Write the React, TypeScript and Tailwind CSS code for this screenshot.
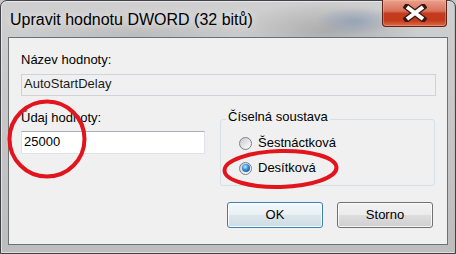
import { type ReactNode } from 'react';

function CloseButton() {
  return (
    <div className="-mt-px mr-px flex h-[27px] w-[65px] items-center justify-center rounded-b-[4px] border border-t-0 border-[#5a2418] bg-[linear-gradient(to_bottom,#e9a08c_0%,#d9735a_42%,#c43b1d_52%,#c23a1c_78%,#de6a47_100%)] shadow-[inset_0_0_0_1px_rgba(255,200,180,0.35)]">
      <svg width="24" height="18" viewBox="0 0 24 18">
        <path d="M4 3 L20 15 M20 3 L4 15" stroke="#3a1710" strokeWidth="6.5" strokeLinecap="square" />
        <path d="M4 3 L20 15 M20 3 L4 15" stroke="#ffffff" strokeWidth="4" strokeLinecap="butt" />
      </svg>
    </div>
  );
}

function Radio({ label, checked }: { label: string; checked?: boolean }) {
  return (
    <div className="flex h-[16px] items-center gap-[6px]">
      <span className="flex h-[13px] w-[13px] items-center justify-center rounded-full border border-[#7d8185] bg-[linear-gradient(135deg,#c9cacb_0%,#e8e8e8_55%,#ffffff_100%)]">
        {checked && (
          <span className="h-[8px] w-[8px] rounded-full bg-[radial-gradient(circle_at_40%_35%,#c4ecff_0%,#3b92dd_40%,#0a3470_100%)]" />
        )}
      </span>
      <span>{label}</span>
    </div>
  );
}

function Button({ children, isDefault }: { children: ReactNode; isDefault?: boolean }) {
  return (
    <button
      className={
        isDefault
          ? 'flex h-[26px] w-[96px] items-center justify-center rounded-[3px] border border-[#3c7fb1] bg-[linear-gradient(to_bottom,#f3f7fa_0%,#e9f0f4_50%,#dbe5eb_50%,#cfdce5_100%)] shadow-[inset_0_0_0_1px_rgba(255,255,255,0.8)]'
          : 'flex h-[26px] w-[96px] items-center justify-center rounded-[3px] border border-[#707070] bg-[linear-gradient(to_bottom,#f2f2f2_0%,#ebebeb_50%,#dddddd_50%,#cfcfcf_100%)] shadow-[inset_0_0_0_1px_rgba(255,255,255,0.8)]'
      }
    >
      {children}
    </button>
  );
}

function Annotations() {
  return (
    <svg
      className="pointer-events-none absolute left-0 top-0"
      width="456"
      height="254"
      viewBox="0 0 456 254"
    >
      <ellipse cx="47" cy="139" rx="37.5" ry="37.5" fill="none" stroke="#e2141c" strokeWidth="4" />
      <ellipse
        cx="280.5"
        cy="169"
        rx="56"
        ry="18"
        fill="none"
        stroke="#e2141c"
        strokeWidth="4"
        transform="rotate(-1.5 280.5 169)"
      />
    </svg>
  );
}

export default function App() {
  return (
    <div className="relative h-[254px] w-[456px] overflow-hidden bg-[#c6c6c6] font-['Liberation_Sans',Arial,sans-serif] text-[13px] leading-[16px] text-black">
      <div className="flex h-full flex-col rounded-t-[7px] border border-[#3f4347] bg-[radial-gradient(ellipse_40px_14px_at_78%_8%,rgba(120,145,180,0.55),transparent),radial-gradient(ellipse_90px_30px_at_72%_12%,rgba(150,150,150,0.6),transparent),radial-gradient(ellipse_120px_24px_at_30%_14%,rgba(170,170,170,0.5),transparent),linear-gradient(to_bottom,#cfcfcf_0%,#c4c4c4_60%,#bdbdbd_100%)] px-[7px] pb-[8px] shadow-[inset_0_0_0_1px_rgba(255,255,255,0.5),inset_-5px_0_0_-4px_#7a7a7a]">
        <div className="flex h-[36px] shrink-0 items-start justify-between">
          <div className="pl-[2px] pt-[9px] text-[16px] leading-[20px] [text-shadow:0_0_8px_rgba(255,255,255,0.9)]">
            Upravit hodnotu DWORD (32 bitů)
          </div>
          <CloseButton />
        </div>

        <div className="flex flex-1 flex-col border border-[#6b7075] bg-[#f0f0f0] pl-[12px] pr-[11px]">
          <div className="mt-[14px]">Název hodnoty:</div>
          <div className="mt-[6px] h-[22px] border border-[#cfd2d6] bg-[#f0f0f0] px-[2px] pt-[1px] text-[#1a1a1a]">
            AutoStartDelay
          </div>

          <div className="flex items-start gap-[15px]">
            <div className="mt-[14px] flex w-[184px] flex-col">
              <div>Údaj hodnoty:</div>
              <div className="mt-[5px] h-[23px] border border-[#dfe3e8] border-t-[#abadb3] bg-white px-[2px] pt-[2px]">
                25000
              </div>
            </div>

            <div className="relative mt-[23px] h-[67px] w-[215px] rounded-[3px] border border-[#d5dfe5] pl-[18px] pt-[15px]">
              <span className="absolute -top-[11px] left-[5px] bg-[#f0f0f0] px-[2px]">
                Číselná soustava
              </span>
              <div className="flex flex-col gap-[9px]">
                <Radio label="Šestnáctková" />
                <Radio label="Desítková" checked />
              </div>
            </div>
          </div>

          <div className="mr-[3px] mt-[16px] flex justify-end gap-[14px]">
            <Button isDefault>OK</Button>
            <Button>Storno</Button>
          </div>
        </div>
      </div>
      <Annotations />
    </div>
  );
}
